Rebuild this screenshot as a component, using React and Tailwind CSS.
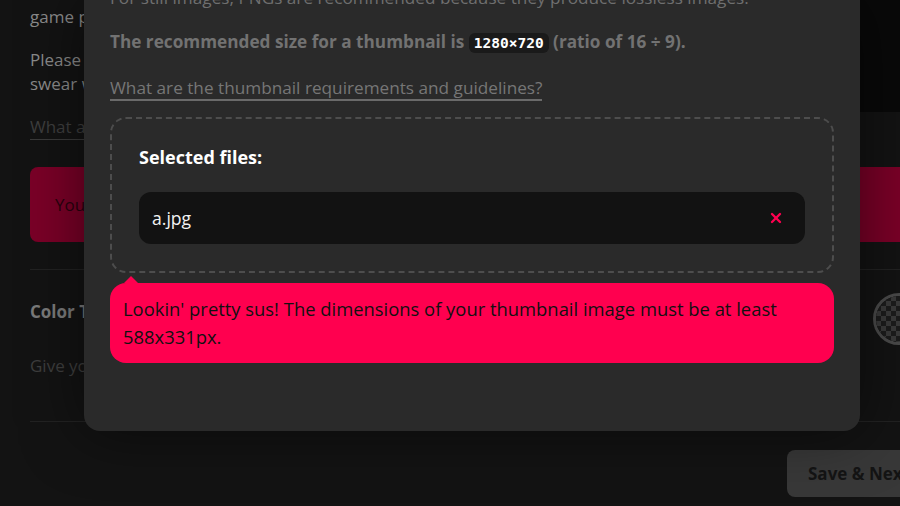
import { X } from "lucide-react";

function Checker() {
  return (
    <div className="w-[52px] h-[52px] rounded-full border-[3px] border-[#4a4a4a] overflow-hidden shrink-0 translate-x-[25px] translate-y-[7px]">
      <div className="w-full h-full bg-[#1c1c1c] bg-[length:10px_10px] bg-[linear-gradient(45deg,#3a3a3a_25%,transparent_25%,transparent_75%,#3a3a3a_75%),linear-gradient(45deg,#3a3a3a_25%,transparent_25%,transparent_75%,#3a3a3a_75%)] bg-[position:0_0,5px_5px]" />
    </div>
  );
}

export default function App() {
  return (
    <div className="relative h-[506px] w-[900px] overflow-hidden bg-[#131313] font-['Open_Sans','Lato',sans-serif]">
      {/* page behind the modal */}
      <div className="pl-[30px] text-[17px]">
        <div className="flex h-[112px]">
          <div className="flex-1 pt-[5px] text-[#8a8a8a] leading-[24px]">
            <p>game page</p>
            <p className="mt-[19px]">Please don't use</p>
            <p>swear words</p>
          </div>
          <div className="w-[40px] bg-[#090909]" />
        </div>
        <div className="w-[60px] border-b border-[#3a3a3a] pt-[3px] leading-[24px] text-[#3e3e3e]">What a</div>
        <div className="mt-[27px] flex h-[75px] items-center rounded-l-lg bg-[#7a0027] pl-[25px] text-[#2a000e]">
          You
        </div>
        <div className="mt-[27px] border-t border-[#222]" />
        <div className="flex h-[84px] items-center justify-between">
          <span className="font-bold text-[#7a7a7a]">Color T</span>
          <Checker />
        </div>
        <p className="pb-[43px] leading-[24px] text-[#3e3e3e]">Give your</p>
        <div className="border-t border-[#222]" />
        <div className="mt-[28px] flex justify-end">
          <button className="h-[47px] w-[113px] rounded-l-lg bg-[#383838] pl-[21px] text-left text-[17px] font-bold whitespace-nowrap text-[#141414]">
            Save &amp; Next
          </button>
        </div>
      </div>

      {/* modal */}
      <div className="absolute left-[84px] top-0 w-[776px] rounded-b-2xl bg-[#2a2a2a] px-[26px] pb-[68px] shadow-[0_0_60px_rgba(0,0,0,0.5)] text-[17.2px]">
        <p className="-mt-[14px] leading-[24px] text-[#6f6f6f]">
          For still images, PNGs are recommended because they produce lossless images.
        </p>
        <p className="mt-[18px] leading-[28px] font-bold text-[#727272]">
          The recommended size for a thumbnail is{" "}
          <code className="rounded-md bg-[#1a1a1a] px-[5px] py-[2px] font-['DejaVu_Sans_Mono',monospace] text-[14.5px] font-bold text-white">
            1280×720
          </code>{" "}
          (ratio of 16 ÷ 9).
        </p>
        <div className="mt-[18px]">
          <span className="inline-block border-b-2 border-[#6a6a6a] leading-[23px] text-[#767676]">
            What are the thumbnail requirements and guidelines?
          </span>
        </div>
        <div className="mt-[16px] rounded-2xl border-2 border-dashed border-[#4d4d4d] px-[27px] pt-[26px] pb-[27px]">
          <p className="text-[18px] leading-[24px] font-bold text-white">Selected files:</p>
          <div className="mt-[23px] flex h-[52px] items-center justify-between rounded-xl bg-[#121212] pl-[13px] pr-[21px]">
            <span className="text-[17.6px] text-[#f2f2f2]">a.jpg</span>
            <X size={16} strokeWidth={3.5} className="text-[#ff0050]" />
          </div>
        </div>
        <div className="relative mt-[10px] rounded-2xl bg-[#ff004f] py-[12px] pl-[13px] pr-[40px] text-[18.4px] leading-[28px] text-[#111]">
          <div className="absolute -top-[7px] left-[14px] h-0 w-0 border-x-[7px] border-b-[7px] border-x-transparent border-b-[#ff004f]" />
          Lookin' pretty sus! The dimensions of your thumbnail image must be at least 588x331px.
        </div>
      </div>
    </div>
  );
}
